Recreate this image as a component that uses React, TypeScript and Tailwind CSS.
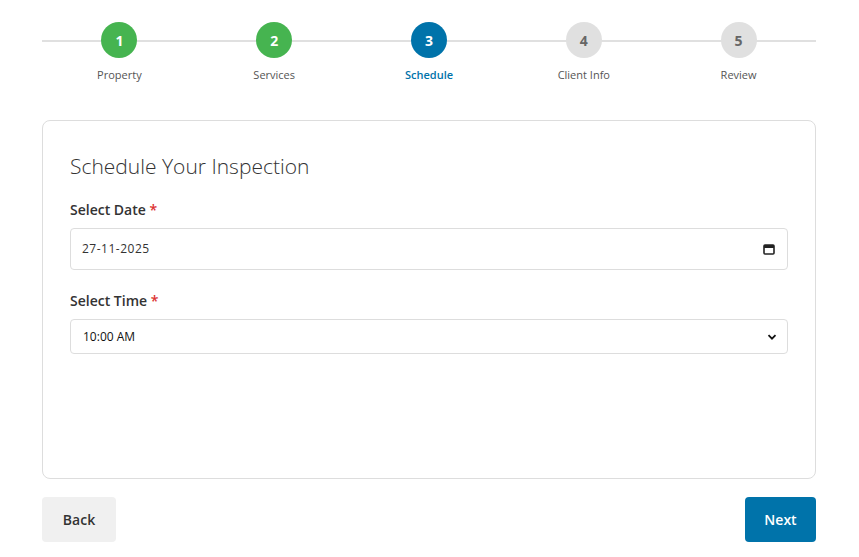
const steps = [
  { n: 1, label: 'Property', state: 'done' },
  { n: 2, label: 'Services', state: 'done' },
  { n: 3, label: 'Schedule', state: 'active' },
  { n: 4, label: 'Client Info', state: 'todo' },
  { n: 5, label: 'Review', state: 'todo' },
];

function Stepper() {
  return (
    <div className="relative">
      {/* track line behind the circles */}
      <div className="absolute left-0 right-0 top-[18px] h-[2px] bg-[#e0e0e0]" />
      <div className="relative grid grid-cols-5">
        {steps.map((s) => (
          <div key={s.n} className="flex flex-col items-center">
            <div
              className={`w-9 h-9 rounded-full flex items-center justify-center text-[14px] font-bold ${
                s.state === 'done'
                  ? 'bg-[#46b450] text-white'
                  : s.state === 'active'
                    ? 'bg-[#0073aa] text-white'
                    : 'bg-[#e0e0e0] text-[#666]'
              }`}
            >
              {s.n}
            </div>
            <span
              className={`mt-[10px] text-[11px] leading-[14px] ${
                s.state === 'active' ? 'text-[#0073aa] font-semibold' : 'text-[#555]'
              }`}
            >
              {s.label}
            </span>
          </div>
        ))}
      </div>
    </div>
  );
}

function Label({ children }: { children: string }) {
  return (
    <div className="text-[14px] font-semibold text-[#333] leading-5 mb-[8px]">
      {children} <span className="text-[#dc3232]">*</span>
    </div>
  );
}

export default function App() {
  return (
    <div className="min-h-screen bg-white font-['Open_Sans','Noto_Sans',sans-serif]">
      <div className="w-[774px] ml-[42px] pt-[22px]">
        <Stepper />

        <div className="mt-[38px] h-[359px] border border-[#ddd] rounded-[8px] px-[27px] pt-[30px]">
          <h2 className="text-[21px] font-light text-[#333] leading-[30px] mb-[19px]">Schedule Your Inspection</h2>

          <Label>Select Date</Label>
          <div className="h-[42px] border border-[#ddd] rounded-[4px] flex items-center justify-between pl-[11px] pr-[12px]">
            <span className="text-[12px] text-[#333] tracking-[0.5px]">27-11-2025</span>
            <svg width="12" height="12" viewBox="0 0 12 12" fill="none">
              <rect x="1" y="2" width="10" height="9" rx="1" stroke="#222" strokeWidth="1.6" />
              <rect x="1" y="2" width="10" height="3" fill="#222" />
            </svg>
          </div>

          <div className="mt-[21px]">
            <Label>Select Time</Label>
          </div>
          <div className="h-[35px] border border-[#ddd] rounded-[4px] flex items-center justify-between pl-[12px] pr-[10px]">
            <span className="text-[12px] text-[#111]">10:00 AM</span>
            <svg width="10" height="10" viewBox="0 0 10 10" fill="none">
              <path d="M1.5 3.2 L5 6.7 L8.5 3.2" stroke="#111" strokeWidth="1.8" />
            </svg>
          </div>
        </div>

        <div className="mt-[18px] flex justify-between">
          <button className="w-[74px] h-[45px] rounded-[4px] bg-[#f0f0f0] text-[14px] font-semibold text-[#333]">
            Back
          </button>
          <button className="w-[71px] h-[45px] rounded-[4px] bg-[#0073aa] text-[14px] font-semibold text-white">
            Next
          </button>
        </div>
      </div>
    </div>
  );
}
